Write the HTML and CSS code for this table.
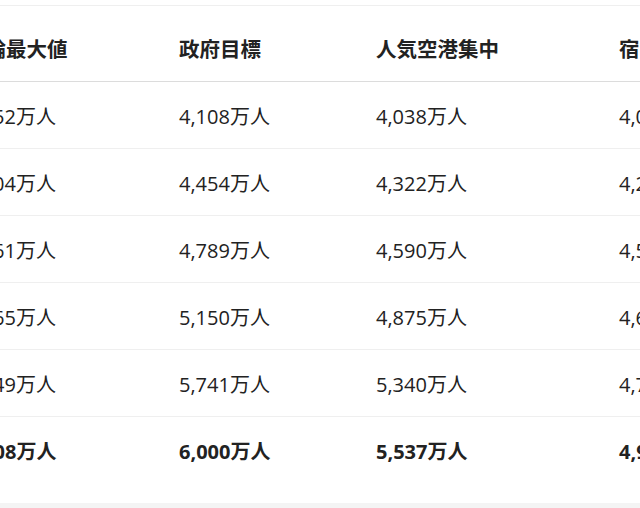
FILE: index.html
```html
<!DOCTYPE html>
<html lang="ja">
<head>
<meta charset="utf-8">
<link rel="stylesheet" href="styles.css">
</head>
<body>
<div class="page">
  <div class="topbar"></div>
  <div class="card">
    <div class="scroller">
      <table class="data">
        <thead>
          <tr>
            <th class="c1">理論最大値</th>
            <th class="c2">政府目標</th>
            <th class="c3">人気空港集中</th>
            <th class="c4">宿泊施設制約</th>
          </tr>
        </thead>
        <tbody>
          <tr><td>4,152万人</td><td>4,108万人</td><td>4,038万人</td><td>4,011万人</td></tr>
          <tr><td>4,504万人</td><td>4,454万人</td><td>4,322万人</td><td>4,250万人</td></tr>
          <tr><td>4,861万人</td><td>4,789万人</td><td>4,590万人</td><td>4,512万人</td></tr>
          <tr><td>5,265万人</td><td>5,150万人</td><td>4,875万人</td><td>4,650万人</td></tr>
          <tr><td>5,849万人</td><td>5,741万人</td><td>5,340万人</td><td>4,780万人</td></tr>
          <tr class="total"><td>6,508万人</td><td>6,000万人</td><td>5,537万人</td><td>4,920万人</td></tr>
        </tbody>
      </table>
    </div>
  </div>
  <div class="footer"></div>
</div>
</body>
</html>
```
FILE: styles.css
```css
html, body {
  margin: 0;
  padding: 0;
  background: #ffffff;
}
.page {
  width: 640px;
  height: 508px;
  overflow: hidden;
  font-family: "Open Sans", "Noto Sans CJK JP", sans-serif;
  color: #222222;
}
.topbar {
  height: 5px;
  background: #ffffff;
}
.card {
  background: #ffffff;
  border-top: 1px solid #efefef;
  padding-bottom: 20px;
}
.scroller {
  overflow: hidden;
}
.data {
  border-collapse: collapse;
  table-layout: fixed;
  width: 854px;
  margin-left: -59px;
}
.data th, .data td {
  box-sizing: border-box;
  text-align: left;
  padding: 0 0 0 24px;
  font-size: 20px;
  line-height: 30px;
  white-space: nowrap;
}
.data th {
  font-family: "Noto Sans CJK JP", sans-serif;
  font-size: 20.5px;
  font-weight: 700;
  padding-top: 27px;
  padding-bottom: 18px;
  border-bottom: 1px solid #dcdcdc;
}
.data td {
  font-weight: 400;
  padding-top: 20px;
  padding-bottom: 16px;
  border-bottom: 1px solid #efefef;
}
.data tr.total td {
  font-weight: 700;
  border-bottom: none;
}
.c1 { width: 214px; }
.c2 { width: 197px; }
.c3 { width: 243px; }
.c4 { width: 200px; }
.footer {
  height: 20px;
  background: #f4f4f4;
}
```
